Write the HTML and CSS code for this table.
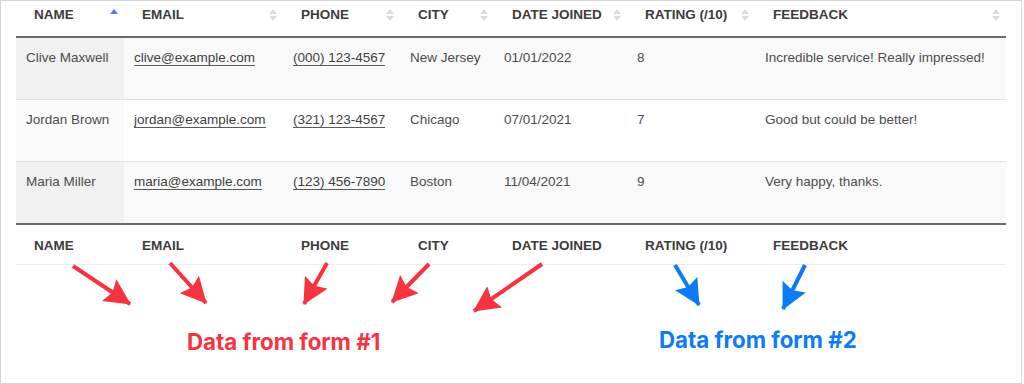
FILE: index.html
```html
<!DOCTYPE html>
<html lang="en">
<head>
<meta charset="utf-8">
<title>Entries table</title>
<link rel="stylesheet" href="styles.css">
</head>
<body>
<div class="frame">
  <table class="entries">
    <colgroup>
      <col class="c-name"><col class="c-email"><col class="c-phone"><col class="c-city"><col class="c-date"><col class="c-rating"><col class="c-feedback">
    </colgroup>
    <thead>
      <tr>
        <th><div class="th-in"><span>Name</span><svg class="sort" viewBox="0 0 8 12"><path class="up asc" d="M0 5 L4 0 L8 5 Z"/><path class="down faint" d="M0 7 L8 7 L4 12 Z"/></svg></div></th>
        <th><div class="th-in"><span>Email</span><svg class="sort" viewBox="0 0 8 12"><path class="up" d="M0 5 L4 0 L8 5 Z"/><path class="down" d="M0 7 L8 7 L4 12 Z"/></svg></div></th>
        <th><div class="th-in"><span>Phone</span><svg class="sort" viewBox="0 0 8 12"><path class="up" d="M0 5 L4 0 L8 5 Z"/><path class="down" d="M0 7 L8 7 L4 12 Z"/></svg></div></th>
        <th><div class="th-in"><span>City</span><svg class="sort" viewBox="0 0 8 12"><path class="up" d="M0 5 L4 0 L8 5 Z"/><path class="down" d="M0 7 L8 7 L4 12 Z"/></svg></div></th>
        <th><div class="th-in"><span>Date Joined</span><svg class="sort" viewBox="0 0 8 12"><path class="up" d="M0 5 L4 0 L8 5 Z"/><path class="down" d="M0 7 L8 7 L4 12 Z"/></svg></div></th>
        <th><div class="th-in"><span>Rating (/10)</span><svg class="sort" viewBox="0 0 8 12"><path class="up" d="M0 5 L4 0 L8 5 Z"/><path class="down" d="M0 7 L8 7 L4 12 Z"/></svg></div></th>
        <th><div class="th-in"><span>Feedback</span><svg class="sort" viewBox="0 0 8 12"><path class="up" d="M0 5 L4 0 L8 5 Z"/><path class="down" d="M0 7 L8 7 L4 12 Z"/></svg></div></th>
      </tr>
    </thead>
    <tbody>
      <tr class="odd">
        <td class="sorted">Clive Maxwell</td>
        <td><a class="link" href="#">clive@example.com</a></td>
        <td><a class="link" href="#">(000) 123-4567</a></td>
        <td>New Jersey</td>
        <td>01/01/2022</td>
        <td>8</td>
        <td>Incredible service! Really impressed!</td>
      </tr>
      <tr class="even">
        <td class="sorted">Jordan Brown</td>
        <td><a class="link" href="#">jordan@example.com</a></td>
        <td><a class="link" href="#">(321) 123-4567</a></td>
        <td>Chicago</td>
        <td>07/01/2021</td>
        <td>7</td>
        <td>Good but could be better!</td>
      </tr>
      <tr class="odd">
        <td class="sorted">Maria Miller</td>
        <td><a class="link" href="#">maria@example.com</a></td>
        <td><a class="link" href="#">(123) 456-7890</a></td>
        <td>Boston</td>
        <td>11/04/2021</td>
        <td>9</td>
        <td>Very happy, thanks.</td>
      </tr>
    </tbody>
    <tfoot>
      <tr>
        <th>Name</th>
        <th>Email</th>
        <th>Phone</th>
        <th>City</th>
        <th>Date Joined</th>
        <th>Rating (/10)</th>
        <th>Feedback</th>
      </tr>
    </tfoot>
  </table>

  <div class="notes">
    <svg class="arrows" viewBox="0 0 1024 384" width="1024" height="384">
      <defs>
        <marker id="head-red" viewBox="0 0 26 26" refX="25" refY="13" markerWidth="26" markerHeight="26" markerUnits="userSpaceOnUse" orient="auto">
          <path d="M0 0 L26 13 L0 26 L4 13 Z" fill="#f6333f"/>
        </marker>
        <marker id="head-blue" viewBox="0 0 26 26" refX="25" refY="13" markerWidth="26" markerHeight="26" markerUnits="userSpaceOnUse" orient="auto">
          <path d="M0 0 L26 13 L0 26 L4 13 Z" fill="#0b7bf7"/>
        </marker>
      </defs>
      <g class="red">
        <line x1="73" y1="266" x2="130" y2="304" marker-end="url(#head-red)"/>
        <line x1="170" y1="263" x2="206" y2="303" marker-end="url(#head-red)"/>
        <line x1="327" y1="263" x2="304" y2="304" marker-end="url(#head-red)"/>
        <line x1="429" y1="264" x2="392" y2="302" marker-end="url(#head-red)"/>
        <line x1="542" y1="264" x2="474" y2="311" marker-end="url(#head-red)"/>
      </g>
      <g class="blue">
        <line x1="675" y1="265" x2="699" y2="305" marker-end="url(#head-blue)"/>
        <line x1="805" y1="265" x2="783" y2="309" marker-end="url(#head-blue)"/>
      </g>
    </svg>
    <span class="label label-1">Data from form #1</span>
    <span class="label label-2">Data from form #2</span>
  </div>
</div>
</body>
</html>
```

FILE: styles.css
```css
html, body {
  margin: 0;
  padding: 0;
  background: #ffffff;
}

.frame {
  position: relative;
  box-sizing: border-box;
  width: 1022px;
  height: 384px;
  border: 1px solid #d4d4d4;
  padding: 0 0 0 15px;
  font-family: "Liberation Sans", Arial, Helvetica, sans-serif;
  color: #4a4a4a;
  overflow: hidden;
}

.entries {
  width: 990px;
  table-layout: fixed;
  border-collapse: collapse;
  border-spacing: 0;
}

.c-name { width: 108px; }
.c-email { width: 159px; }
.c-phone { width: 117px; }
.c-city { width: 94px; }
.c-date { width: 133px; }
.c-rating { width: 128px; }
.c-feedback { width: 251px; }

.entries th {
  font-size: 13.5px;
  font-weight: bold;
  text-transform: uppercase;
  color: #3c3c3c;
  text-align: left;
  line-height: 16px;
  white-space: nowrap;
}

.entries thead th {
  padding: 6px 6px 13px 18px;
  border-bottom: 2px solid #6b6b6b;
}

.th-in {
  display: flex;
  align-items: center;
  justify-content: space-between;
}

.sort {
  width: 8px;
  height: 12px;
  flex: none;
}

.sort path { fill: #dcdcdc; }
.sort path.asc { fill: #6d6ff2; }
.sort path.faint { fill: #ffffff; }

.entries td {
  font-size: 13.5px;
  line-height: 16px;
  padding: 12px 10px 33px 10px;
  vertical-align: top;
  white-space: nowrap;
  color: #4d4d4d;
  border-top: 1px solid #e2e2e2;
}

.entries tbody tr:first-child td {
  border-top: none;
}

.entries tr.odd td { background: #f9f9f9; }
.entries tr.odd td.sorted { background: #f1f1f1; }
.entries tr.even td { background: #ffffff; }
.entries tr.even td.sorted { background: #fafafa; }

.link {
  color: #3f3f3f;
  text-decoration: none;
  border-bottom: 1px solid #5a5a5a;
}

.entries tfoot th {
  padding: 13px 18px 10px 18px;
  border-top: 2px solid #6b6b6b;
  border-bottom: 1px solid #ececec;
}

.notes {
  position: absolute;
  left: -1px;
  top: -1px;
  width: 1024px;
  height: 384px;
  pointer-events: none;
}

.arrows {
  position: absolute;
  left: 0;
  top: 0;
}

.arrows .red line {
  stroke: #f6333f;
  stroke-width: 4;
}

.arrows .blue line {
  stroke: #0b7bf7;
  stroke-width: 4;
}

.label {
  position: absolute;
  font-family: Inter, "Noto Sans", "Liberation Sans", sans-serif;
  font-weight: 700;
  font-size: 22.3px;
  line-height: 26px;
  white-space: nowrap;
}

.label-1 {
  left: 187px;
  top: 329px;
  color: #f6333f;
}

.label-2 {
  left: 659px;
  top: 327px;
  color: #0b7bf7;
}
```
